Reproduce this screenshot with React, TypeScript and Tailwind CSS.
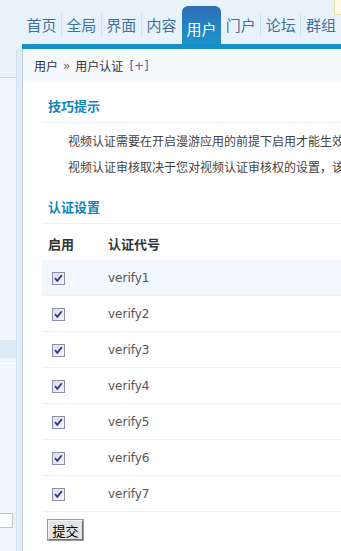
import React from "react";

const cjk = { fontFamily: '"Noto Sans CJK SC", "DejaVu Sans", sans-serif' };
const latin = { fontFamily: '"DejaVu Sans", "Noto Sans CJK SC", sans-serif' };

function Check() {
  return (
    <svg width="13" height="13" viewBox="0 0 13 13" className="block">
      <defs>
        <linearGradient id="cbg" x1="0" y1="0" x2="1" y2="1">
          <stop offset="0" stopColor="#dcdce6" />
          <stop offset="1" stopColor="#f6f6fa" />
        </linearGradient>
      </defs>
      <rect x="0.5" y="0.5" width="12" height="12" fill="url(#cbg)" stroke="#8e8fa8" />
      <path d="M3 6.2 L5.3 8.8 L9.8 3.2" fill="none" stroke="#2f2fa0" strokeWidth="1.8" />
    </svg>
  );
}

const tabs = ["首页", "全局", "界面", "内容", "用户", "门户", "论坛", "群组"];
const rows = ["verify1", "verify2", "verify3", "verify4", "verify5", "verify6", "verify7"];

export default function App() {
  return (
    <div className="relative w-[341px] h-[551px] overflow-hidden bg-[#e8f2fa]" style={cjk}>
      {/* top-right note */}
      <div className="absolute left-[334px] top-[-1px] w-[20px] h-[16px] bg-[#fffbe6] border border-[#eadfb0]" />

      {/* header */}
      <div className="h-[49px] flex flex-col">
        <div className="h-[44px] flex items-end pl-[22px]">
          {tabs.map((t, i) => {
            const active = t === "用户";
            const nextActive = tabs[i + 1] === "用户";
            return active ? (
              <div
                key={t}
                className="w-[40px] h-[38px] rounded-t-[6px] bg-gradient-to-b from-[#2d6fb5] to-[#1b93cc] text-white text-[15px] flex items-center justify-center pt-[8px]"
              >
                {t}
              </div>
            ) : (
              <div
                key={t}
                className={`w-[40px] h-[24px] flex items-center justify-center text-[15px] text-[#3f72a2] mb-[7px] ${
                  nextActive || i === tabs.length - 1 ? "" : "border-r border-[#cfe0ee]"
                }`}
              >
                {t}
              </div>
            );
          })}
        </div>
        <div className="h-[5px] ml-[22px] bg-[#1390c8]" />
      </div>

      {/* body */}
      <div className="flex h-[502px]">
        {/* sidebar */}
        <div className="w-[22px] flex shrink-0">
          <div className="w-[16px] flex flex-col">
            <div className="h-[29px] bg-[#e8f2fa] border-b border-[#c9d9e6]" />
            <div className="h-[262px] bg-[#f0f7fc]" />
            <div className="h-[18px] bg-[#dcebf7]" />
            <div className="h-[6px] bg-[#f0f7fc] border-b border-[#ffffff]" />
            <div className="h-[149px] bg-[#f0f7fc]" />
            <div className="h-[15px] bg-white border border-l-0 border-[#c6c6c6] w-[13px]" />
            <div className="flex-1 bg-[#f0f7fc]" />
          </div>
          <div className="w-[6px] bg-[#e0edf8] border-l border-[#d3e3f0]" />
        </div>

        {/* main */}
        <div className="flex-1 border-l border-[#b8cde0] bg-white flex flex-col min-w-0">
          <div className="h-[33px] bg-[#f6fafd] flex items-center pl-[11px] text-[12px] text-[#333] whitespace-nowrap">
            <span>用户</span>
            <span className="mx-[5px] text-[#666]" style={latin}>»</span>
            <span>用户认证</span>
            <span className="ml-[6px] text-[#3d6a9c]" style={latin}>[+]</span>
          </div>

          <div className="pl-[19px] pt-[7px] flex flex-col">
            <div className="h-[34px] flex items-center pt-[1px] pl-[6px] border-b border-[#eef1f4] text-[13px] font-bold text-[#0e86bd]">
              技巧提示
            </div>
            <div className="pt-[4px] pl-[26px] text-[12px] text-[#444] whitespace-nowrap overflow-hidden">
              <div className="h-[26px] flex items-center pt-[1px]">视频认证需要在开启漫游应用的前提下启用才能生效，请注意</div>
              <div className="h-[26px] flex items-center pt-[1px]">视频认证审核取决于您对视频认证审核权的设置，该设置</div>
            </div>

            <div className="mt-[11px] h-[34px] flex items-center pt-[1px] pl-[6px] border-b border-[#eef1f4] text-[13px] font-bold text-[#0e86bd]">
              认证设置
            </div>

            <div className="h-[36px] flex items-center pt-[4px] pl-[6px] text-[13px] font-bold text-[#333]">
              <div className="w-[60px]">启用</div>
              <div>认证代号</div>
            </div>

            {rows.map((r, i) => (
              <div
                key={r}
                className={`h-[36px] flex items-center pt-[1px] border-b border-[#eef1f4] ${i === 0 ? "bg-[#f1f7fc]" : ""}`}
              >
                <div className="w-[66px] pl-[10px]">
                  <Check />
                </div>
                <div className="text-[12px] text-[#555]" style={latin}>
                  {r}
                </div>
              </div>
            ))}

            <div className="pt-[8px] pl-[6px]">
              <button
                className="w-[35px] h-[20px] bg-[#e4e4e4] border border-t-[#f4f4f4] border-l-[#f4f4f4] border-r-[#707070] border-b-[#707070] outline outline-1 outline-[#9a9a9a] text-[13px] text-black flex items-center justify-center leading-none"
                style={cjk}
              >
                提交
              </button>
            </div>
          </div>
        </div>
      </div>
    </div>
  );
}
